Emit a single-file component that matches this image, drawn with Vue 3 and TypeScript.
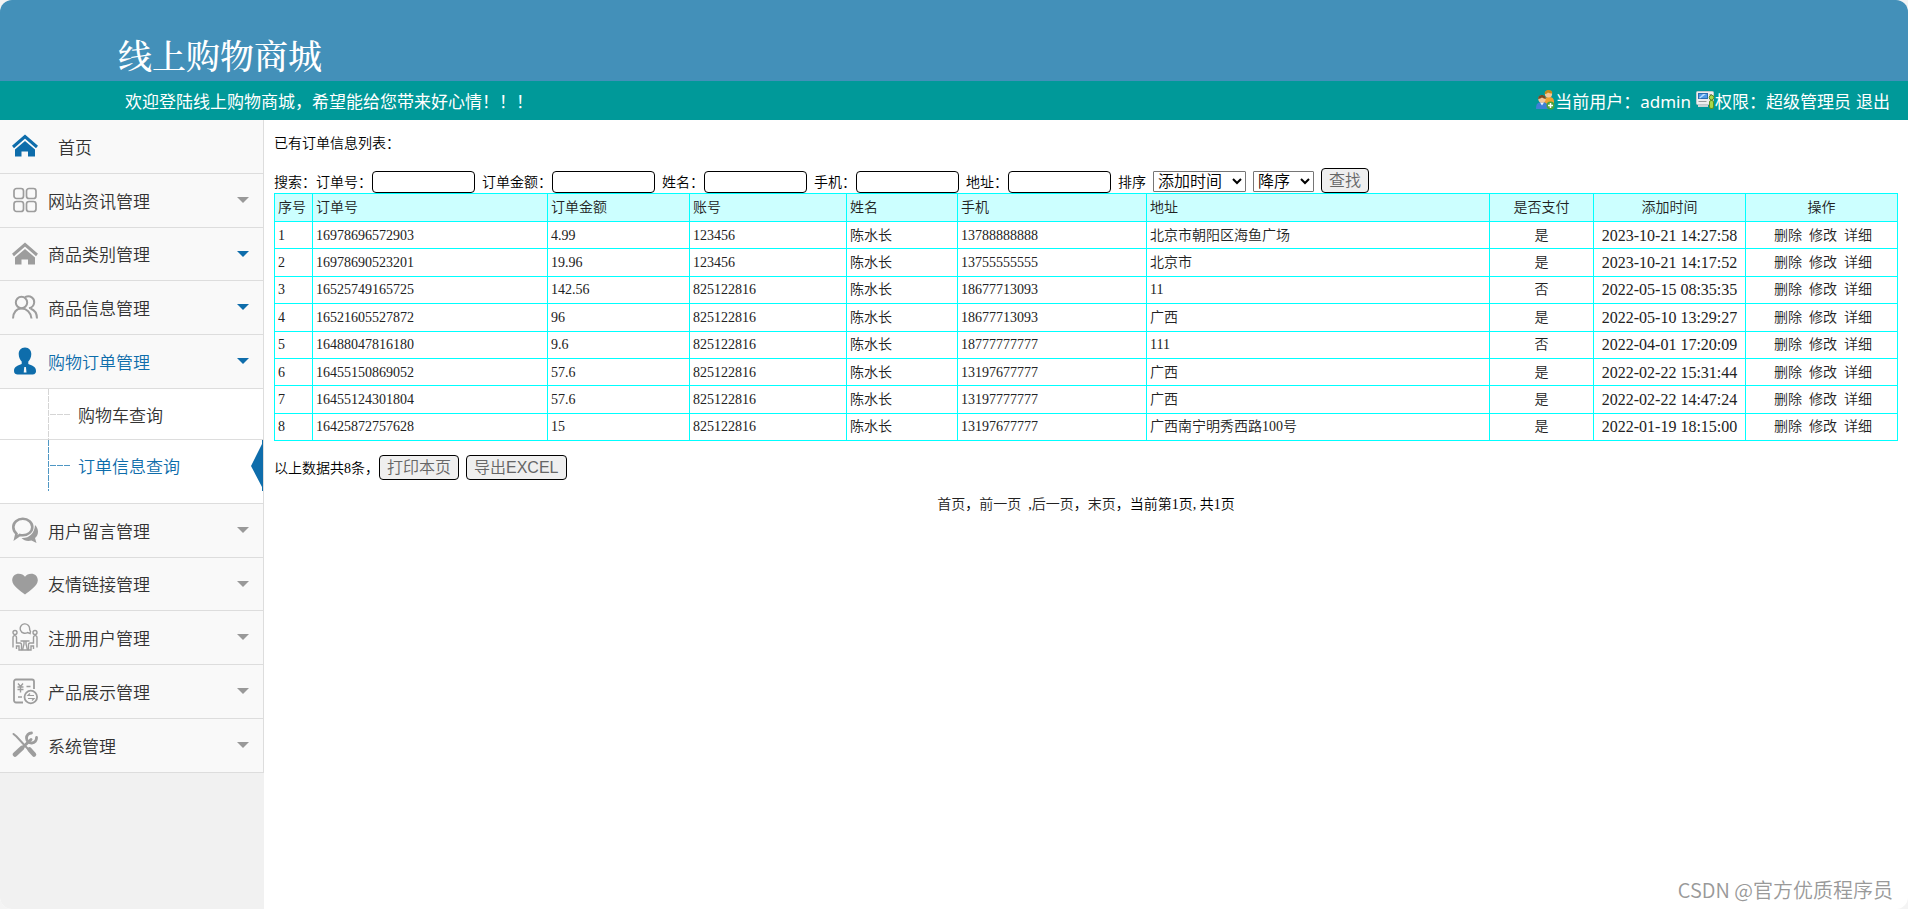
<script setup lang="ts">
import { ref } from 'vue'

type IconName = 'home' | 'grid' | 'people' | 'person' | 'chat' | 'heart' | 'meeting' | 'invoice' | 'tools'

interface SubItem {
  label: string
  active: boolean
}

interface MenuItem {
  label: string
  icon: IconName
  arrow: 'none' | 'gray' | 'blue'
  active?: boolean
  home?: boolean
  children?: SubItem[]
}

interface Order {
  no: string
  amount: string
  account: string
  name: string
  phone: string
  address: string
  paid: string
  time: string
}

const menu: MenuItem[] = [
  { label: '首页', icon: 'home', arrow: 'none', home: true },
  { label: '网站资讯管理', icon: 'grid', arrow: 'gray' },
  { label: '商品类别管理', icon: 'home', arrow: 'blue' },
  { label: '商品信息管理', icon: 'people', arrow: 'blue' },
  {
    label: '购物订单管理',
    icon: 'person',
    arrow: 'blue',
    active: true,
    children: [
      { label: '购物车查询', active: false },
      { label: '订单信息查询', active: true },
    ],
  },
  { label: '用户留言管理', icon: 'chat', arrow: 'gray' },
  { label: '友情链接管理', icon: 'heart', arrow: 'gray' },
  { label: '注册用户管理', icon: 'meeting', arrow: 'gray' },
  { label: '产品展示管理', icon: 'invoice', arrow: 'gray' },
  { label: '系统管理', icon: 'tools', arrow: 'gray' },
]

const fields = ref([
  { id: 'f-no', label: '订单号：', value: '' },
  { id: 'f-amount', label: '订单金额：', value: '' },
  { id: 'f-name', label: '姓名：', value: '' },
  { id: 'f-phone', label: '手机：', value: '' },
  { id: 'f-address', label: '地址：', value: '' },
])
const sortBy = ref('添加时间')
const sortDir = ref('降序')

const orders: Order[] = [
  { no: '16978696572903', amount: '4.99', account: '123456', name: '陈水长', phone: '13788888888', address: '北京市朝阳区海鱼广场', paid: '是', time: '2023-10-21 14:27:58' },
  { no: '16978690523201', amount: '19.96', account: '123456', name: '陈水长', phone: '13755555555', address: '北京市', paid: '是', time: '2023-10-21 14:17:52' },
  { no: '16525749165725', amount: '142.56', account: '825122816', name: '陈水长', phone: '18677713093', address: '11', paid: '否', time: '2022-05-15 08:35:35' },
  { no: '16521605527872', amount: '96', account: '825122816', name: '陈水长', phone: '18677713093', address: '广西', paid: '是', time: '2022-05-10 13:29:27' },
  { no: '16488047816180', amount: '9.6', account: '825122816', name: '陈水长', phone: '18777777777', address: '111', paid: '否', time: '2022-04-01 17:20:09' },
  { no: '16455150869052', amount: '57.6', account: '825122816', name: '陈水长', phone: '13197677777', address: '广西', paid: '是', time: '2022-02-22 15:31:44' },
  { no: '16455124301804', amount: '57.6', account: '825122816', name: '陈水长', phone: '13197777777', address: '广西', paid: '是', time: '2022-02-22 14:47:24' },
  { no: '16425872757628', amount: '15', account: '825122816', name: '陈水长', phone: '13197677777', address: '广西南宁明秀西路100号', paid: '是', time: '2022-01-19 18:15:00' },
]
</script>

<template>
  <div class="page" lang="zh-CN">
    <header class="banner">
      <h1>线上购物商城</h1>
    </header>
    <div class="bar">
      <span class="welcome">欢迎登陆线上购物商城，希望能给您带来好心情！！！</span>
      <div class="user">
        <svg class="mini" viewBox="0 0 19 20" aria-hidden="true">
          <path d="M8 12c0-4 2-5 5-5s5 1 5 5v2H8z" fill="#f0a030" />
          <circle cx="12.500" cy="4" r="3.600" fill="#f3c79a" />
          <path d="M8.800 4C8.500 1 10.500 0 12.600 0s4 1 3.700 3.600C14.500 3.400 13 3 12 2.400 11 3.500 10 4 8.800 4z" fill="#c98a1c" />
          <path d="M0 19c0-5 1.500-7 6-7s6 2 6 7z" fill="#3f7fd6" />
          <path d="M4 12.500l2 3 2-3z" fill="#e9f2ff" />
          <circle cx="6" cy="9" r="3.700" fill="#f3c79a" />
          <path d="M2.200 9C2 6 4 5 6 5s4 1 3.800 4C8.500 8.600 7.200 8 6 7.400 5 8.200 3.600 8.800 2.200 9z" fill="#7a4a22" />
          <circle cx="14.500" cy="15.500" r="4" fill="#4ea23a" />
          <path d="M14.500 13v5M12 15.500h5" stroke="#fff" stroke-width="1.500" />
        </svg>
        <span>当前用户：admin</span>
        <svg class="mini second" viewBox="0 0 19 20" aria-hidden="true">
          <rect x=".5" y="1.500" width="17" height="13" rx="1" fill="#efefef" stroke="#c2c8cc" />
          <rect x="2.500" y="3.500" width="9" height="5" fill="#4c9be8" stroke="#2c6cb0" />
          <path d="M3 8l4-4h3L4 8.500z" fill="#b8dcff" />
          <path d="M13.500 4.500h2.500M2.500 11.500h8" stroke="#999" />
          <rect x="2" y="15" width="10" height="2" fill="#cfd4d6" />
          <circle cx="15.500" cy="7.500" r="2.300" fill="#a8d84a" stroke="#5d8e1c" />
          <rect x="13.500" y="10.500" width="4" height="8" rx="1.500" fill="#a8d84a" stroke="#5d8e1c" />
        </svg>
        <span>权限：超级管理员</span>
        <a href="#" class="logout">退出</a>
      </div>
    </div>

    <div class="body">
      <nav class="side" aria-label="管理菜单">
        <ul class="menu">
          <li v-for="(item, i) in menu" :key="i">
            <a href="#" class="entry" :class="{ active: item.active, home: item.home }">
              <svg class="icon" :class="{ blue: item.active || item.home }" viewBox="0 0 26 28" aria-hidden="true">
                <template v-if="item.icon === 'home'">
                  <path d="M1 15 13 4.500 25 15" fill="none" stroke="currentColor" stroke-width="3" />
                  <path d="M13 9 3 17.500v7h6.500v-5h6.500v5h7v-7z" fill="currentColor" />
                </template>
                <g v-else-if="item.icon === 'grid'" fill="none" stroke="currentColor" stroke-width="1.700">
                  <rect x="2" y="2.500" width="9.500" height="10" rx="2.500" />
                  <rect x="14.500" y="2.500" width="9.500" height="10" rx="2.500" />
                  <rect x="2" y="15.500" width="9.500" height="10" rx="2.500" />
                  <rect x="14.500" y="15.500" width="9.500" height="10" rx="2.500" />
                </g>
                <g v-else-if="item.icon === 'people'" fill="none" stroke="currentColor" stroke-width="2">
                  <circle cx="9.500" cy="9.500" r="5.700" />
                  <path d="M13 4.200c5.500-2.500 9.500 1.300 9.200 5.300-.3 3-2.200 5-5.200 5.700" />
                  <path d="M1 25.500c0-6 3.500-10 8.500-10s9.500 4 10 10" />
                  <path d="M18.500 15.500c4 1.500 6.500 5 6.500 10" />
                </g>
                <template v-else-if="item.icon === 'person'">
                  <path d="M13 .5c4.200 0 6.300 3 6.300 6.500 0 3.800-1.600 6-3 7.500v2.500c3 1.400 7.700 2 7.700 7 0 2.800-2 3.500-3.500 3.500h-15C4 27.500 2 26.800 2 24c0-5 4.700-5.600 7.700-7v-2.500c-1.400-1.500-3-3.700-3-7.500C6.700 3.500 8.800.5 13 .5z" fill="currentColor" />
                  <path d="M12.300 20h1.600l.6 5.500h-2.800z" fill="#f9f9f9" />
                </template>
                <template v-else-if="item.icon === 'chat'">
                  <path d="M10.800 2.800c5.400 0 9.500 3.600 9.500 8.200s-4.100 8.300-9.500 8.300c-1.200 0-2-.1-3-.4L3.500 22l1-4.300C2.600 16 1.300 13.700 1.300 11c0-4.600 4.100-8.200 9.500-8.200z" fill="none" stroke="currentColor" stroke-width="2.600" />
                  <path d="M23 9c2 2 3 4.200 3 6.700 0 2.500-1 4.600-3 6.300l1.500 5-5-2.500c-3.800 1-7.500.2-10-2.500 7.500.5 13-4.500 13.500-13z" fill="currentColor" />
                </template>
                <path v-else-if="item.icon === 'heart'" d="M13 24.500C8 20.500.5 16 .2 10.500.1 6.500 3 3.800 6.800 3.800c2.600 0 4.900 1 6.200 3 1.300-2 3.600-3 6.200-3 3.800 0 6.700 2.700 6.600 6.700C25.500 16 18 20.500 13 24.500z" fill="currentColor" />
                <g v-else-if="item.icon === 'meeting'" fill="none" stroke="currentColor" stroke-width="1.400">
                  <path d="M15.500 9.500A4.700 4.700 0 1 1 17.600 6c0 1 .4 1.500.9 2.300l-.4 2.200z" />
                  <circle cx="3" cy="9.500" r="2" />
                  <circle cx="23" cy="9.500" r="2" />
                  <path d="M1 24.500V14.500c0-2.500 3.500-2.500 3.500 0V20H8c1 0 1.500 1 1.500 2v5H7v-4H4.500v3" />
                  <path d="M25 24.500V14.500c0-2.500-3.500-2.500-3.500 0V20H18c-1 0-1.500 1-1.500 2v5H19v-4h2.500v3" />
                  <path d="M8.500 18h9M12 18v3l-1.500 6h5L14 21v-3" />
                </g>
                <g v-else-if="item.icon === 'invoice'" fill="none" stroke="currentColor" stroke-width="1.800">
                  <path d="M11 25.500H4a2 2 0 0 1-2-2V4.500a2 2 0 0 1 2-2h16a2 2 0 0 1 2 2V12" />
                  <circle cx="18.800" cy="20" r="6.300" />
                  <path d="M6 6.500l2.500 3 2.500-3M5.500 10h6M5.500 12.500h6M8.500 9.500v6M14.500 9.500h4M6 20h4" stroke-width="1.400" />
                  <path d="M22 18.500h-6l2-2M16 21.500h6l-2 2" stroke-width="1.200" />
                </g>
                <g v-else fill="none" stroke="currentColor" stroke-linecap="round">
                  <path d="M1.500 3l3 2.500L16 18" stroke-width="2" />
                  <path d="M17.500 18.500l4.500 5" stroke-width="4.500" />
                  <path d="M3 23.500 10 17" stroke-width="4.500" />
                  <path d="M9 18 19 8.500" stroke-width="3" />
                  <path d="M24.500 6.500a5 5 0 1 1-5-4.500" stroke-width="2.800" />
                </g>
              </svg>
              <span class="text">{{ item.label }}</span>
              <span v-if="item.arrow !== 'none'" class="caret" :class="item.arrow"></span>
            </a>
            <ul v-if="item.children" class="sub">
              <li v-for="child in item.children" :key="child.label">
                <a href="#" class="leaf" :class="{ active: child.active }">
                  <svg class="branch" viewBox="0 0 24 51" aria-hidden="true">
                    <path d="M.5 0v51M2 25.500h20" fill="none" stroke="currentColor" stroke-dasharray="6 1" />
                  </svg>
                  <span class="text">{{ child.label }}</span>
                  <svg v-if="child.active" class="marker" viewBox="0 0 12 51" aria-hidden="true">
                    <path d="M12 0h-1v4L0 26l11 21v4h1z" fill="currentColor" />
                  </svg>
                </a>
              </li>
            </ul>
          </li>
        </ul>
      </nav>

      <main class="main">
        <p class="caption">已有订单信息列表：</p>
        <form class="search" @submit.prevent>
          <span class="lead">搜索：</span>
          <span v-for="f in fields" :key="f.id" class="field">
            <label :for="f.id">{{ f.label }}</label>
            <input :id="f.id" v-model="f.value" type="text" />
          </span>
          <label for="sort-by">排序</label>
          <select id="sort-by" v-model="sortBy" class="by">
            <option>添加时间</option>
            <option>订单金额</option>
          </select>
          <select v-model="sortDir" class="dir" aria-label="排序方向">
            <option>降序</option>
            <option>升序</option>
          </select>
          <button type="submit" class="btn">查找</button>
        </form>

        <table class="orders">
          <colgroup>
            <col class="c-idx" /><col class="c-no" /><col class="c-amount" /><col class="c-account" /><col class="c-name" />
            <col class="c-phone" /><col /><col class="c-paid" /><col class="c-time" /><col class="c-ops" />
          </colgroup>
          <thead>
            <tr>
              <th>序号</th>
              <th>订单号</th>
              <th>订单金额</th>
              <th>账号</th>
              <th>姓名</th>
              <th>手机</th>
              <th>地址</th>
              <th class="mid">是否支付</th>
              <th class="mid">添加时间</th>
              <th class="mid">操作</th>
            </tr>
          </thead>
          <tbody>
            <tr v-for="(o, i) in orders" :key="o.no">
              <td>{{ i + 1 }}</td>
              <td>{{ o.no }}</td>
              <td>{{ o.amount }}</td>
              <td>{{ o.account }}</td>
              <td>{{ o.name }}</td>
              <td>{{ o.phone }}</td>
              <td>{{ o.address }}</td>
              <td class="mid">{{ o.paid }}</td>
              <td class="mid time">{{ o.time }}</td>
              <td>
                <div class="ops"><a href="#">删除</a><a href="#">修改</a><a href="#">详细</a></div>
              </td>
            </tr>
          </tbody>
        </table>

        <div class="summary">
          <span>以上数据共8条，</span>
          <button type="button" class="btn">打印本页</button>
          <button type="button" class="btn">导出EXCEL</button>
        </div>
        <p class="pager">
          <a href="#">首页</a>，<a href="#">前一页</a>&nbsp; ,<a href="#">后一页</a>，<a href="#">末页</a>，<span>当前第1页, 共1页</span>
        </p>
      </main>
    </div>
    <div class="credit">CSDN @官方优质程序员</div>
  </div>
</template>

<style>
html,
body {
  margin: 0;
  background: #f4f4f4;
}
</style>

<style scoped>
.page {
  position: relative;
  display: flex;
  flex-direction: column;
  min-height: 100vh;
  border-radius: 12px;
  overflow: hidden;
  background: #fff;
  color: #000;
  font-family: 'Liberation Serif', 'Noto Sans CJK SC', serif;
  font-size: 14px;
  font-weight: 350;
}
a {
  color: inherit;
  text-decoration: none;
}
ul {
  list-style: none;
  margin: 0;
  padding: 0;
}
.banner {
  padding: 33px 118px 4px;
  background: #4390b9;
}
.banner h1 {
  margin: 0;
  color: #fff;
  font-family: 'Noto Serif CJK SC', 'Noto Sans CJK SC', serif;
  font-size: 34px;
  font-weight: 500;
  line-height: 44px;
}
.bar {
  display: flex;
  justify-content: space-between;
  align-items: center;
  height: 39px;
  padding: 3px 18px 0 125px;
  box-sizing: border-box;
  background: #009999;
  color: #fff;
  font-family: 'Noto Sans', 'Noto Sans CJK SC', sans-serif;
  font-size: 17px;
  font-weight: 400;
  line-height: 36px;
}
.user {
  display: flex;
  align-items: center;
}
.mini {
  width: 19px;
  height: 20px;
  margin-bottom: 4px;
}
.mini.second {
  margin-left: 5px;
}
.logout {
  margin-left: 5px;
}
.body {
  display: flex;
  flex: 1;
}
.side {
  flex: none;
  width: 264px;
  background: #f1f1f1;
  color: #333;
  font-family: 'Noto Sans', 'Noto Sans CJK SC', sans-serif;
  font-size: 17px;
}
.menu {
  border-right: 1px solid #ddd;
}
.entry {
  display: flex;
  align-items: center;
  height: 54px;
  padding: 0 14px 1px 12px;
  box-sizing: border-box;
  border-bottom: 1px solid #ddd;
  background: #f9f9f9;
}
.menu > li:nth-child(4n + 3) .entry {
  height: 53px;
}
.icon {
  width: 26px;
  height: 28px;
  margin-right: 10px;
  color: #9d9d9d;
}
.home .icon {
  margin-right: 20px;
}
.icon.blue,
.active {
  color: #0e6dab;
}
.text {
  flex: 1;
}
.caret {
  border: 6px solid transparent;
  border-bottom: 0;
  border-top-color: #999;
}
.caret.blue {
  border-top-color: #0e6dab;
}
.sub {
  height: 115px;
  box-sizing: border-box;
  border-bottom: 1px solid #ddd;
  background: #fff;
}
.leaf {
  display: flex;
  align-items: center;
  height: 51px;
}
.sub li:first-child .leaf {
  box-sizing: border-box;
  border-bottom: 1px solid #ddd;
}
.branch {
  width: 24px;
  height: 51px;
  margin: 0 6px 0 48px;
  color: #d5d5d5;
}
.active .branch {
  color: #4f97c4;
}
.marker {
  width: 12px;
  height: 51px;
}
.main {
  flex: 1;
  min-width: 0;
  padding: 14px 10px 0;
}
.caption {
  margin: 0;
  line-height: 20px;
}
.search {
  display: flex;
  align-items: flex-end;
  gap: 7px;
  margin-top: 14px;
  line-height: 20px;
}
.lead {
  margin-right: -7px;
}
.field {
  display: flex;
  align-items: flex-end;
}
input {
  width: 103px;
  height: 22px;
  box-sizing: border-box;
  border: 1px solid #000;
  border-radius: 4px;
  background: #fff;
  font: inherit;
}
select {
  height: 21px;
  margin: 0 0 1px;
  padding: 0;
  box-sizing: border-box;
  border: 1px solid #767676;
  border-radius: 1px;
  background: #fff;
  color: #000;
  font-family: 'Liberation Sans', 'Noto Sans CJK SC', sans-serif;
  font-size: 16px;
  font-weight: 350;
}
.by {
  width: 93px;
}
.dir {
  width: 61px;
}
.btn {
  height: 25px;
  padding: 0 7px;
  box-sizing: border-box;
  border: 1px solid #000;
  border-radius: 4px;
  background: #efefef;
  color: #666;
  font-family: 'Liberation Sans', 'Noto Sans CJK SC', sans-serif;
  font-size: 16px;
  font-weight: 350;
  line-height: 22px;
}
.orders {
  width: 100%;
  height: 248px;
  table-layout: fixed;
  border-collapse: collapse;
  color: #222;
  line-height: 20px;
}
.orders tr {
  height: 27px;
}
.orders thead tr {
  height: 28px;
}
.orders th,
.orders td {
  padding: 1px 0 0 3px;
  border: 1px solid #00ffff;
  font-weight: 350;
  text-align: left;
  white-space: nowrap;
}
.orders th {
  background: #ccffff;
}
.orders .mid {
  padding: 1px 0 0;
  text-align: center;
}
.orders .time {
  font-size: 16px;
}
.ops {
  display: flex;
  justify-content: center;
  gap: 7px;
}
.c-idx {
  width: 38px;
}
.c-no {
  width: 235px;
}
.c-amount {
  width: 142px;
}
.c-account {
  width: 157px;
}
.c-name {
  width: 111px;
}
.c-phone {
  width: 189px;
}
.c-paid {
  width: 104px;
}
.c-time,
.c-ops {
  width: 152px;
}
.summary {
  display: flex;
  align-items: flex-end;
  gap: 7px;
  margin-top: 14px;
}
.summary span {
  margin-right: -7px;
  line-height: 22px;
}
.pager {
  margin: 15px 0 0;
  line-height: 20px;
  text-align: center;
}
.pager a {
  color: #222;
}
.credit {
  position: absolute;
  right: 15px;
  bottom: 5px;
  color: #999;
  font-family: 'Noto Sans CJK SC', sans-serif;
  font-size: 20px;
  line-height: 28px;
  text-shadow: 1px 1px 0 #fff;
}
</style>
